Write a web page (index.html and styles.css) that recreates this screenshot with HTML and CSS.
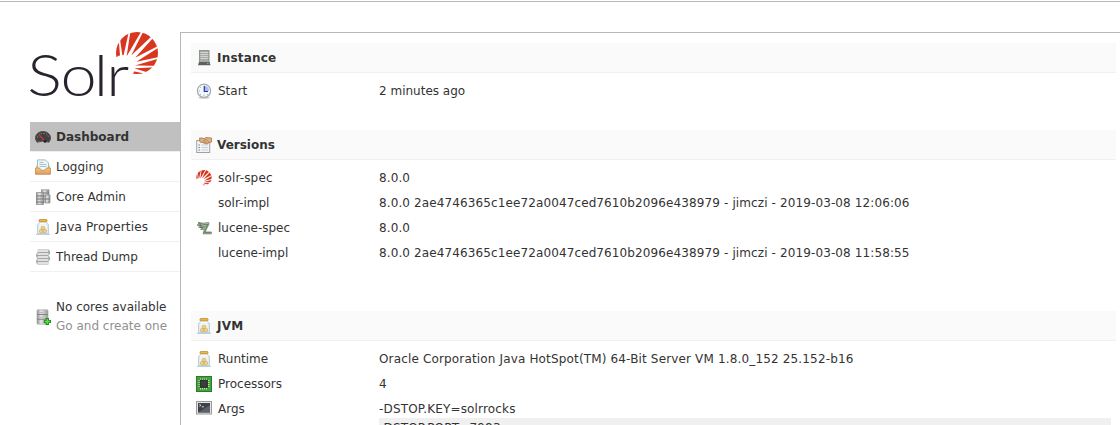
FILE: index.html
```html
<!DOCTYPE html>
<html lang="en">
<head>
<meta charset="utf-8">
<title>Solr Admin</title>
<link rel="stylesheet" href="styles.css">
</head>
<body>
<svg class="defs" aria-hidden="true">
  <defs>
    <linearGradient id="metal" x2="1"><stop stop-color="#8e8e8e"/><stop offset=".35" stop-color="#e6e6e6"/><stop offset="1" stop-color="#999"/></linearGradient>
    <linearGradient id="box" y2="1" x2="0"><stop stop-color="#f6c78a"/><stop offset="1" stop-color="#d89b5d"/></linearGradient>
    <symbol id="sun" viewBox="0 0 44 44">
      <circle cx="22" cy="21" r="21" fill="#d9361f"/>
      <path d="M6 35L3 0H4L9 35ZM6 35L14 -1H15.5L10 35ZM6 34L26.5 -1L28 0L10 36ZM6 33L37 4L38.5 5.5L10 37ZM6 33L43 14L43.7 15.5L10 37ZM6 33L44 25V26.5L8 37ZM8 33L44 34V35L8 37ZM8 33L38 42L36 43L8 37Z" fill="#fff"/>
      <circle cx="8" cy="35" r="12" fill="#fff"/>
    </symbol>
    <symbol id="dashboard" viewBox="0 0 16 16">
      <path d="M.5 10C0 5 4 2.5 8 2.5S16 5 15.5 10L14 13.2Q8 11 2 13.2Z" fill="#414144" stroke="#555"/>
      <path d="M2.5 8.5Q3 4.5 8 4.5T13.5 8.5" fill="none" stroke="#999" stroke-dasharray="1 1.6"/>
      <path d="M4 6L10 12" stroke="#e32d25" stroke-width="1.1"/><circle cx="10" cy="12.2" r="1.5" fill="#222"/>
    </symbol>
    <symbol id="logging" viewBox="0 0 16 16">
      <path d="M2 5L.6 10V15H15.4V10L14 5" fill="#e7b06c"/>
      <path d="M2.5 .9H10.5L13.5 4V12H2.5Z" fill="#edf6f8" stroke="#9dbdc4"/>
      <path d="M4.5 3.5H8.5M4.5 5.5H11.5M4.5 7.5H11.5" stroke="#a6c3c5"/>
      <path d="M.6 9H4.5Q5 11.5 8 11.5T11.5 9H15.4V15.3H.6Z" fill="url(#box)" stroke="#c98747" stroke-width=".8"/>
    </symbol>
    <symbol id="cores" viewBox="0 0 16 16">
      <path d="M6.5 .8H14V13H6.5Z" fill="url(#metal)" stroke="#888" stroke-width=".7"/>
      <path d="M7 4H14M7 7H14M7 10H14" stroke="#757575"/>
      <path d="M1.5 3.5H8.5V15.5H1.5Z" fill="url(#metal)" stroke="#888" stroke-width=".7"/>
      <path d="M1 7H9M1 10H9M1 13H9" stroke="#757575"/>
      <path d="M10 6H15V14H10Z" fill="url(#metal)" stroke="#888" stroke-width=".7"/><path d="M10 10H15" stroke="#777"/><path d="M7 14H8V15H7ZM12 2H13V3H12ZM13 12H14V13H13Z" fill="#58bd55"/>
    </symbol>
    <symbol id="jar" viewBox="0 0 16 16">
      <path d="M4.5 3.5H11.5L13.3 5.8V14.8H2.7V5.8Z" fill="#edf4f6" stroke="#b3c5cf"/>
      <path d="M1 15.3H15" stroke="#a5cce6"/>
      <rect x="4" y=".5" width="8" height="2.4" rx=".7" fill="#e8b551" stroke="#bd8327" stroke-width=".7"/>
      <path d="M4.5 4H11.5" stroke="#fff"/>
      <g fill="#f0d18a" stroke="#c99e50" stroke-width=".6"><rect x="6.2" y="7.5" width="3.5" height="3" rx="1"/><rect x="4.5" y="10.6" width="3.4" height="3.2" rx="1"/><rect x="8" y="10.4" width="3.5" height="3.4" rx="1"/></g>
    </symbol>
    <symbol id="threads" viewBox="0 0 16 16">
      <g fill="none" stroke="#a5a5a5" stroke-width="2.8" stroke-linejoin="round"><path d="M2.5 2H13.2L13.8 3.5L13 5H3L2.4 6.5L3 8H13L13.8 9.5L13 11H3L2.4 12.5L3 14H13.5"/></g>
      <g fill="none" stroke="#f5f5f5" stroke-width="1.4" stroke-linejoin="round"><path d="M2 2H13.2M2.6 5H13.4M2.6 8H13.4M2.6 11H13.4M2.6 14H13.4"/></g>
    </symbol>
    <symbol id="rack-add" viewBox="0 0 16 16">
      <rect x="2" y=".8" width="11" height="14.4" rx="1" fill="url(#metal)" stroke="#aaa" stroke-width=".7"/>
      <path d="M2 5.5H13M2 10.3H13" stroke="#858585"/>
      <path d="M3.5 3.5H8M3.5 8.3H8" stroke="#bbb"/>
      <path d="M12.3 9V16M8.8 12.5H16" stroke="#168d19" stroke-width="3.2"/>
      <path d="M12.3 10V15M9.8 12.5H15" stroke="#68dc51" stroke-width="1.3"/>
    </symbol>
    <symbol id="server" viewBox="0 0 16 16">
      <rect x="3.5" y=".5" width="9.5" height="12" fill="#a8aaa8" stroke="#929292"/>
      <path d="M4.5 2.5H12M4.5 4.5H12M4.5 6.5H12M4.5 8.5H12" stroke="#d2d2d2"/>
      <path d="M3 12H13.5L14.5 15.2H2Z" fill="#5e605e"/><path d="M11 13.5H12.5" stroke="#65ce55"/>
    </symbol>
    <symbol id="clock" viewBox="0 0 16 16">
      <ellipse cx="8" cy="14.6" rx="5.5" ry="1.2" fill="#c6c6c6"/>
      <circle cx="8" cy="7.8" r="6.6" fill="#f4f7fc" stroke="#a4abb4" stroke-width="1.2"/>
      <path d="M8 2.6V8H13A5 5 0 0 0 8 2.6Z" fill="#a9b9f2"/>
      <path d="M8.3 3V8.5H12" fill="none" stroke="#27349a" stroke-width="1.2"/>
      <path d="M8 11.5V13M2.6 8H4M4 4L5 5M4 12L5 11M12 12L11 11" stroke="#9da9ba" stroke-width=".8"/>
    </symbol>
    <symbol id="versions" viewBox="0 0 16 16">
      <rect x=".7" y="3.5" width="13" height="12" fill="#f3f4f5" stroke="#a1a1a1"/>
      <path d="M2.5 8H4M2.5 10.5H4M2.5 13H4" stroke="#6a8199"/><path d="M5.5 8H12M5.5 10.5H12M5.5 13H12" stroke="#c9ced2"/>
      <path d="M3.5 1H6L8 1.8L10 .5L15.5 1V5L13 5.8L10.5 7L7 5.6L4 5Z" fill="#dfb17e" stroke="#a6774a" stroke-width=".8"/>
      <path d="M7 4L10 2.5L13 5M7 5L9 6M9 4.5L11 6" fill="none" stroke="#966b44" stroke-width=".6"/>
    </symbol>
    <symbol id="lucene" viewBox="0 0 16 16">
      <path d="M2 2.5L7 3.2L12.8 2.6L13 4L9 12H15.3V13.8H7L8.5 9.5L4.5 9.3L7 8L2.5 7.2L6 6L1 5L5 4.5Z" fill="#b0cba8" stroke="#6b7a67" stroke-width=".8"/>
      <path d="M2 3L8 4.5H12M2.5 5L8 6.4L11 6M4 7.3L9.5 8M12 4L8.2 12.7H14.5" fill="none" stroke="#586955" stroke-width=".7"/>
    </symbol>
    <symbol id="cpu" viewBox="0 0 16 16">
      <rect x=".5" y=".5" width="15" height="15" fill="#3da440" stroke="#277b2b"/>
      <path d="M2.5 4.5H13.5M2.5 6.5H13.5M2.5 8.5H13.5M2.5 10.5H13.5M4.5 2.5V13.5M6.5 2.5V13.5M8.5 2.5V13.5M10.5 2.5V13.5" stroke="#dbe89c" stroke-width=".9"/>
      <rect x="4.3" y="4.3" width="7" height="7" fill="#3c3d40" stroke="#202322"/>
    </symbol>
    <symbol id="terminal" viewBox="0 0 16 16">
      <rect x=".5" y="1.5" width="15" height="12.5" fill="#e4e4e4" stroke="#999"/>
      <rect x="2" y="3" width="12" height="9.5" fill="#3d4148"/>
      <path d="M2 12.5L14 5V12.5Z" fill="#5d6065"/><path d="M3.3 4.3L5 5.3L3.3 6.3M5.7 6.8H8" fill="none" stroke="#ddd" stroke-width=".9"/>
    </symbol>
  </defs>
</svg>
<div class="page">
  <aside class="sidebar">
    <svg class="logo" viewBox="0 0 150 90" role="img" aria-label="Solr">
      <use href="#sun" x="85" y="0" width="44" height="44"/>
      <text class="wordmark" y="64" transform="scale(1.14 1)"><tspan x="-2.5">S</tspan><tspan x="26.8">o</tspan><tspan x="56">l</tspan><tspan x="67">r</tspan></text>
    </svg>
    <nav class="menu">
      <a class="item active"><svg class="icon"><use href="#dashboard"/></svg><span>Dashboard</span></a>
      <a class="item"><svg class="icon"><use href="#logging"/></svg><span>Logging</span></a>
      <a class="item"><svg class="icon"><use href="#cores"/></svg><span>Core Admin</span></a>
      <a class="item"><svg class="icon"><use href="#jar"/></svg><span class="spaced">Java Properties</span></a>
      <a class="item"><svg class="icon"><use href="#threads"/></svg><span>Thread Dump</span></a>
    </nav>
    <div class="no-cores"><svg class="icon"><use href="#rack-add"/></svg><div><p>No cores available</p><p class="muted">Go and create one</p></div></div>
  </aside>
  <main class="content">
    <section class="block instance">
      <h2><svg class="icon"><use href="#server"/></svg><span class="title-wide">Instance</span></h2>
      <dl><div class="row"><svg class="icon"><use href="#clock"/></svg><dt>Start</dt><dd>2 minutes ago</dd></div></dl>
    </section>
    <section class="block versions">
      <h2><svg class="icon"><use href="#versions"/></svg><span>Versions</span></h2>
      <dl>
        <div class="row"><svg class="icon"><use href="#sun"/></svg><dt class="spaced">solr-spec</dt><dd class="version">8.0.0</dd></div>
        <div class="row"><svg class="icon"></svg><dt>solr-impl</dt><dd class="version">8.0.0 2ae4746365c1ee72a0047ced7610b2096e438979 - jimczi - 2019-03-08 12:06:06</dd></div>
        <div class="row"><svg class="icon"><use href="#lucene"/></svg><dt>lucene-spec</dt><dd class="version">8.0.0</dd></div>
        <div class="row"><svg class="icon"></svg><dt>lucene-impl</dt><dd class="version">8.0.0 2ae4746365c1ee72a0047ced7610b2096e438979 - jimczi - 2019-03-08 11:58:55</dd></div>
      </dl>
    </section>
    <section class="block">
      <h2><svg class="icon"><use href="#jar"/></svg><span class="title-wide">JVM</span></h2>
      <dl>
        <div class="row"><svg class="icon"><use href="#jar"/></svg><dt>Runtime</dt><dd class="spaced">Oracle Corporation Java HotSpot(TM) 64-Bit Server VM 1.8.0_152 25.152-b16</dd></div>
        <div class="row"><svg class="icon"><use href="#cpu"/></svg><dt>Processors</dt><dd>4</dd></div>
        <div class="row args"><svg class="icon"><use href="#terminal"/></svg><dt>Args</dt><dd class="spaced"><p>-DSTOP.KEY=solrrocks</p><p class="odd">-DSTOP.PORT=7983</p></dd></div>
      </dl>
    </section>
  </main>
</div>
</body>
</html>
```
FILE: styles.css
```css
* { box-sizing: border-box; margin: 0; padding: 0; }
html, body { height: 425px; overflow: hidden; }
body { background: #fff; color: #333; font: 12px/18px "DejaVu Sans", Verdana, sans-serif; }
.defs { display: block; width: 0; height: 0; }
.page { display: flex; height: 425px; padding: 31px 0 0 30px; background: linear-gradient(#b8b8b8, #b8b8b8) 0 1px / 100% 1px no-repeat; }
.sidebar { width: 150px; flex: none; padding-top: 1px; }
.logo { display: block; width: 150px; height: 90px; overflow: visible; }
.wordmark { font: 300 57px Lato, sans-serif; fill: #29232e; }
.icon { display: block; width: 16px; height: 16px; flex: none; }
.item { display: flex; align-items: center; gap: 5px; height: 30px; padding-left: 5px; border-bottom: 1px solid #f0f0f0; }
.active { background: #c0c0c0; background-clip: padding-box; font-weight: bold; }
.no-cores { display: flex; align-items: center; gap: 5px; margin-top: 25px; padding-left: 5px; line-height: 19px; white-space: nowrap; }
.no-cores div { padding-top: 1px; }
.muted { color: #909090; }
.spaced { letter-spacing: .155px; }
.version { letter-spacing: .115px; }
.title-wide { letter-spacing: .2px; }
.content { flex: 1; margin-top: 1px; padding: 10px 4px 0 10px; border-top: 1px solid #b8b8b8; border-left: 1px solid #b8b8b8; overflow: hidden; }
.instance { height: 87px; }
.versions { height: 181px; }
h2 { display: flex; align-items: center; gap: 5px; height: 30px; padding-left: 5px; background: #fafafa; border-bottom: 1px solid #f0f0f0; font-size: 12px; line-height: 18px; }
dl { padding: 5px 5px 0; }
.row { display: flex; align-items: center; height: 25px; }
dt { width: 161px; margin-left: 6px; }
dd { flex: 1; white-space: nowrap; }
.args { height: auto; align-items: flex-start; }
.args .icon { margin-top: 4px; }
.args dt, .args dd { padding-top: 4px; }
.odd { padding-top: 1px; background: #f0f0f0; }
```
